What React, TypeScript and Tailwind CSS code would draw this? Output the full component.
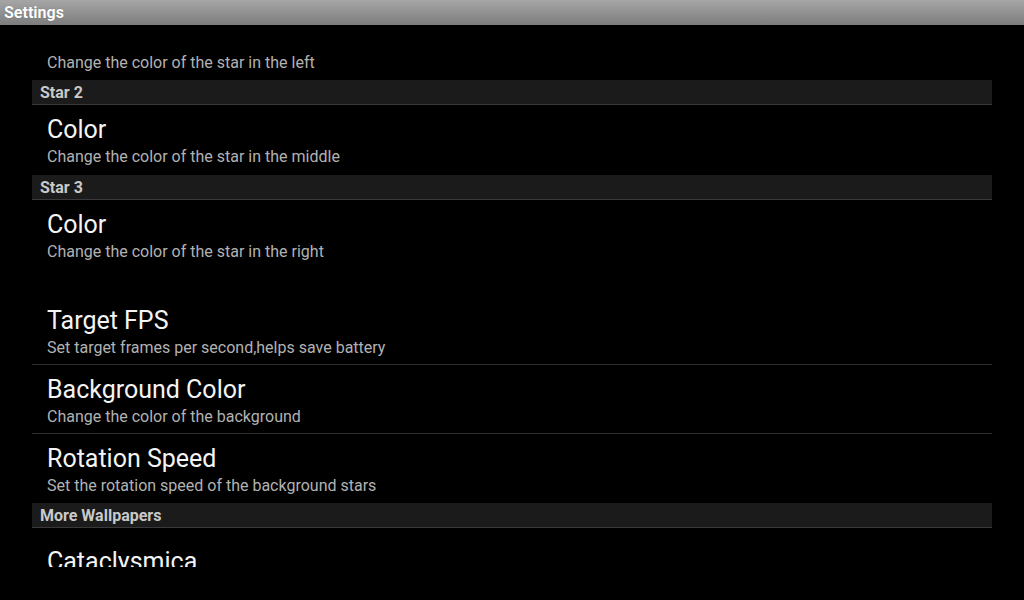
import React from 'react';

type Row =
  | { kind: 'header'; label: string }
  | { kind: 'spacer' }
  | { kind: 'item'; title: string; summary?: string; h: string; pt?: string; divider?: boolean };

const rows: Row[] = [
  { kind: 'header', label: 'Star 2' },
  { kind: 'item', title: 'Color', summary: 'Change the color of the star in the middle', h: 'h-[70px]' },
  { kind: 'header', label: 'Star 3' },
  { kind: 'item', title: 'Color', summary: 'Change the color of the star in the right', h: 'h-[70px]' },
  { kind: 'spacer' },
  { kind: 'item', title: 'Target FPS', summary: 'Set target frames per second,helps save battery', h: 'h-[69px]', divider: true },
  { kind: 'item', title: 'Background Color', summary: 'Change the color of the background', h: 'h-[69px]', divider: true },
  { kind: 'item', title: 'Rotation Speed', summary: 'Set the rotation speed of the background stars', h: 'h-[69px]' },
  { kind: 'header', label: 'More Wallpapers' },
  { kind: 'item', title: 'Cataclysmica', h: 'h-[70px]', pt: 'pt-[20px]' },
];

const App: React.FC = () => {
  return (
    <div
      className="w-[1024px] h-[600px] bg-black flex flex-col overflow-hidden"
      style={{ fontFamily: 'Roboto, "Noto Sans", sans-serif' }}
    >
      {/* Title bar */}
      <div className="h-[25px] shrink-0 bg-gradient-to-b from-[#a6a6a6] to-[#7d7d7d] flex items-center px-[4px]">
        <span className="text-white font-bold text-[16px] leading-none [text-shadow:0_0_1px_rgba(0,0,0,0.4)]">
          Settings
        </span>
      </div>

      {/* Preference list, scrolled part way down */}
      <div className="h-[542px] overflow-hidden px-[32px] flex flex-col">
        {/* tail of the Star 1 entry */}
        <div className="h-[55px] shrink-0 px-[15px] pt-[26px]">
          <span className="text-[#b2b2b2] text-[16px] leading-[20px]">Change the color of the star in the left</span>
        </div>

        {rows.map((row, i) => {
          if (row.kind === 'header') {
            return (
              <div
                key={i}
                className="h-[25px] shrink-0 bg-[#1b1b1b] border-b border-[#3a3a3a] flex items-center px-[8px] pt-[2px]"
              >
                <span className="text-[#c9c9c9] font-bold text-[16px] leading-none">{row.label}</span>
              </div>
            );
          }
          if (row.kind === 'spacer') {
            return <div key={i} className="h-[26px] shrink-0" />;
          }
          return (
            <div
              key={i}
              className={`${row.h} ${row.pt ?? 'pt-[11px]'} shrink-0 px-[15px] flex flex-col ${row.divider ? 'border-b border-[#2e2e2e]' : ''}`}
            >
              <span className="text-[#f4f4f4] text-[25px] leading-[28px] whitespace-nowrap">{row.title}</span>
              {row.summary && (
                <span className="text-[#b2b2b2] text-[16px] leading-[20px] mt-[3px] whitespace-nowrap">{row.summary}</span>
              )}
            </div>
          );
        })}
      </div>
    </div>
  );
};

export default App;
